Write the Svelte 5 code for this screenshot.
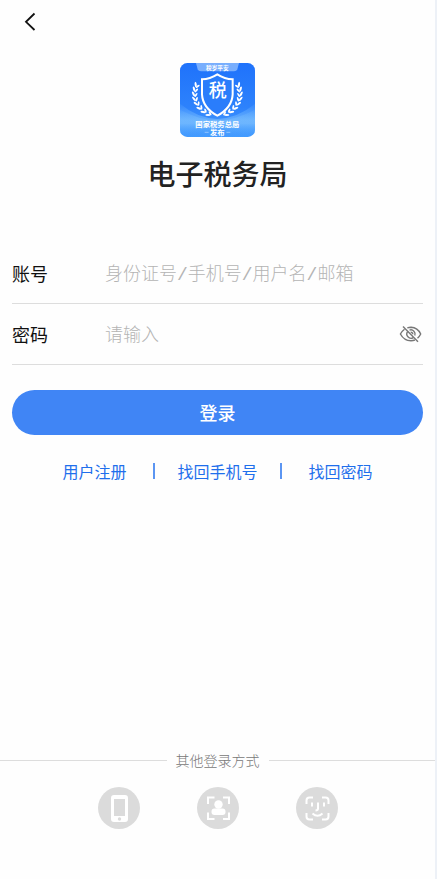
<script>
  let account = '';
  let password = '';
  let showPassword = false;

  // leaf positions along the left branch, mirrored for the right one
  const leaves = [
    [51, 64, 22],
    [46, 77, 12],
    [44, 91, 2],
    [45, 105, -10],
    [50, 119, -24],
    [58, 132, -38],
    [70, 143, -50],
    [84, 152, -60]
  ];

  function togglePassword() {
    showPassword = !showPassword;
  }
</script>

<main class="page">
  <header>
    <button class="back" type="button" aria-label="返回">
      <svg width="12" height="20" viewBox="0 0 12 20" fill="none">
        <path d="M10.5 1.5 L2 9.8 L10.5 18" stroke="#111" stroke-width="1.8" />
      </svg>
    </button>
  </header>

  <section class="brand">
    <svg class="logo" viewBox="0 0 225 222" role="img" aria-label="国家税务总局">
      <defs>
        <linearGradient id="sky" x1="0" y1="0" x2="0" y2="1">
          <stop offset="0" stop-color="#1f72fb" />
          <stop offset="0.6" stop-color="#2d82fc" />
          <stop offset="1" stop-color="#4aa0ff" />
        </linearGradient>
        <linearGradient id="wave" x1="0" y1="0" x2="0" y2="1">
          <stop offset="0" stop-color="#7cc0ff" stop-opacity="0.1" />
          <stop offset="0.5" stop-color="#7cc0ff" stop-opacity="0.6" />
          <stop offset="1" stop-color="#3391ff" stop-opacity="0.2" />
        </linearGradient>
        <clipPath id="tile">
          <rect width="225" height="222" rx="22" />
        </clipPath>
      </defs>
      <g clip-path="url(#tile)">
        <rect width="225" height="222" fill="url(#sky)" />
        <path d="M0 122 Q50 164 112 168 Q175 164 225 122 V222 H0Z" fill="url(#wave)" />
        <path d="M0 140 Q60 172 112 172 Q165 172 225 140 V222 H0Z" fill="url(#wave)" />
        <path d="M48 0 H177 L172 19 Q170 25 162 25 H63 Q55 25 53 19Z" fill="#78aefd" />
      </g>
      <text x="112" y="20" class="ribbon">税岁平安</text>
      <g fill="#fff">
        {#each leaves as [x, y, turn]}
          <g transform="translate({x} {y}) rotate({turn})">
            <ellipse cx="-4" cy="0" rx="3.2" ry="8" transform="rotate(-30)" />
            <ellipse cx="6" cy="2" rx="2.8" ry="7" transform="rotate(30)" />
          </g>
          <g transform="translate({224 - x} {y}) rotate({-turn})">
            <ellipse cx="4" cy="0" rx="3.2" ry="8" transform="rotate(30)" />
            <ellipse cx="-6" cy="2" rx="2.8" ry="7" transform="rotate(-30)" />
          </g>
        {/each}
      </g>
      <path
        d="M112 34 Q90 48 66 49 V94 Q68 134 112 158 Q156 134 158 94 V49 Q134 48 112 34Z"
        fill="#2a7dfb"
        stroke="#fff"
        stroke-width="6"
      />
      <text x="113" y="103" class="emblem">税</text>
      <text x="112" y="193" class="caption">国家税务总局</text>
      <text x="112" y="215" class="caption">发布</text>
      <path d="M74 208 H86 M139 208 H151" stroke="#fff" stroke-width="2" opacity="0.6" />
    </svg>
    <h1>电子税务局</h1>
  </section>

  <form on:submit|preventDefault>
    <div class="field">
      <label for="account">账号</label>
      <input id="account" type="text" placeholder="身份证号/手机号/用户名/邮箱" bind:value={account} />
    </div>
    <div class="field">
      <label for="password">密码</label>
      <input
        id="password"
        type={showPassword ? 'text' : 'password'}
        placeholder="请输入"
        value={password}
        on:input={(e) => (password = e.target.value)}
      />
      <button class="eye" type="button" aria-label="显示密码" on:click={togglePassword}>
        <svg width="24" height="20" viewBox="0 0 24 20" fill="none" stroke="#777" stroke-width="1.4">
          <path d="M5.5 5.2 Q3.1 7 1.4 10 Q5 16.7 12 16.7 Q14.1 16.7 15.9 16" />
          <path d="M8.3 3.8 Q10 3.3 12 3.3 Q18.7 3.6 21.7 10 Q20.5 12.5 18.5 14.2" />
          <path d="M8.8 7.4 A4.2 4.2 0 0 0 14.3 13.6 M10.5 6.1 A4.2 4.2 0 0 1 15.8 11.6" />
          <path d="M11.7 8.2 A2 2 0 0 1 13.8 10.3" />
          <path d="M4 2.5 L19 17.8" />
        </svg>
      </button>
    </div>
    <button class="submit" type="submit">登录</button>
  </form>

  <nav>
    <a href="#register">用户注册</a>
    <span class="bar"></span>
    <a class="middle" href="#phone">找回手机号</a>
    <span class="bar"></span>
    <a href="#password">找回密码</a>
  </nav>

  <footer>
    <div class="divider">其他登录方式</div>
    <div class="methods">
      <button type="button" aria-label="手机登录">
        <svg viewBox="0 0 42 42">
          <path
            d="M16 8 H27 Q30 8 30 11 V32 Q30 35 27 35 H16 Q13 35 13 32 V11 Q13 8 16 8Z M16 12 V29 H27 V12Z"
            fill="#fff"
            fill-rule="evenodd"
          />
          <circle cx="21.5" cy="32" r="1.7" fill="#dbdbdb" />
        </svg>
      </button>
      <button type="button" aria-label="扫描登录">
        <svg viewBox="0 0 42 42">
          <path
            d="M11 17 V10.5 H17.5 M26 10.5 H32 V17 M32 25.5 V32 H26 M17.5 32 H11 V25.5"
            fill="none"
            stroke="#fff"
            stroke-width="2"
          />
          <circle cx="21.5" cy="17.5" r="4.2" fill="#fff" />
          <rect x="14.5" y="21.5" width="14" height="6.5" rx="3" fill="#fff" />
        </svg>
      </button>
      <button type="button" aria-label="刷脸登录">
        <svg viewBox="0 0 42 42" fill="none" stroke="#fff" stroke-width="2">
          <path
            d="M10.5 17 V13.5 Q10.5 10.5 13.5 10.5 H17 M26 10.5 H29.5 Q32.5 10.5 32.5 13.5 V17 M32.5 26 V29.5 Q32.5 32.5 29.5 32.5 H26 M17 32.5 H13.5 Q10.5 32.5 10.5 29.5 V26"
          />
          <path d="M16 15.5 V19.5 M28 15.5 V19.5 M22 15.5 V21.5 Q22 23.5 19.5 23.5" />
          <path d="M16.5 26.5 Q21.5 31 26.5 26.5" />
        </svg>
      </button>
    </div>
  </footer>
</main>

<style>
  :global(body) {
    margin: 0;
    background: #edf1f7;
  }

  .page {
    display: flex;
    flex-direction: column;
    min-height: 100vh;
    margin-right: 2px;
    box-sizing: border-box;
    padding-bottom: 50px;
    background: #fefefe;
    font-family: 'Noto Sans CJK SC', sans-serif;
  }

  button {
    padding: 0;
    border: none;
    background: none;
    font-family: inherit;
    cursor: pointer;
  }

  svg {
    display: block;
  }

  header {
    display: flex;
    height: 44px;
    padding-left: 24px;
  }

  .brand {
    display: flex;
    flex-direction: column;
    align-items: center;
    padding-top: 19px;
  }

  .logo {
    width: 75px;
    height: 74px;
  }

  .logo text {
    fill: #fff;
    text-anchor: middle;
    font-weight: 700;
  }

  .logo .ribbon {
    font-size: 17px;
  }

  .logo .emblem {
    font-size: 54px;
    font-weight: 500;
  }

  .logo .caption {
    font-size: 22px;
  }

  h1 {
    margin: 16px 0 0;
    color: #222;
    font-size: 28px;
    font-weight: 500;
    line-height: 40px;
  }

  form {
    padding: 50px 12px 0;
  }

  .field {
    display: flex;
    align-items: center;
    height: 60px;
    border-bottom: 1px solid #ddd;
  }

  label {
    width: 93px;
    color: #111;
    font-size: 18px;
  }

  input {
    flex: 1;
    min-width: 0;
    padding: 4px 0 0;
    border: none;
    outline: none;
    background: transparent;
    color: #111;
    font-family: 'Liberation Mono', 'Noto Sans CJK SC', monospace;
    font-size: 18px;
    line-height: 28px;
  }

  input::placeholder {
    color: #b4b4b4;
    font-weight: 300;
    opacity: 1;
  }

  .submit {
    width: 100%;
    height: 45px;
    margin-top: 25px;
    padding-bottom: 2px;
    border-radius: 23px;
    background: #4085f5;
    color: #fff;
    font-size: 18px;
    font-weight: 500;
  }

  nav {
    display: flex;
    justify-content: center;
    align-items: center;
    margin-top: 24px;
  }

  a {
    margin: 0 27px;
    color: #1f6fec;
    font-size: 16px;
    line-height: 24px;
    text-decoration: none;
  }

  .middle {
    margin: 0 22px;
  }

  .bar {
    width: 2px;
    height: 16px;
    background: #5b95f2;
  }

  footer {
    margin-top: auto;
  }

  .divider {
    display: flex;
    align-items: center;
    gap: 9px;
    color: #777;
    font-size: 14px;
    font-weight: 300;
    line-height: 20px;
  }

  .divider::before,
  .divider::after {
    content: '';
    flex: 1;
    height: 1px;
    background: #ddd;
  }

  .methods {
    display: flex;
    justify-content: center;
    gap: 57px;
    margin-top: 17px;
  }

  .methods button {
    width: 42px;
    height: 42px;
    border-radius: 50%;
    background: #dbdbdb;
  }
</style>
